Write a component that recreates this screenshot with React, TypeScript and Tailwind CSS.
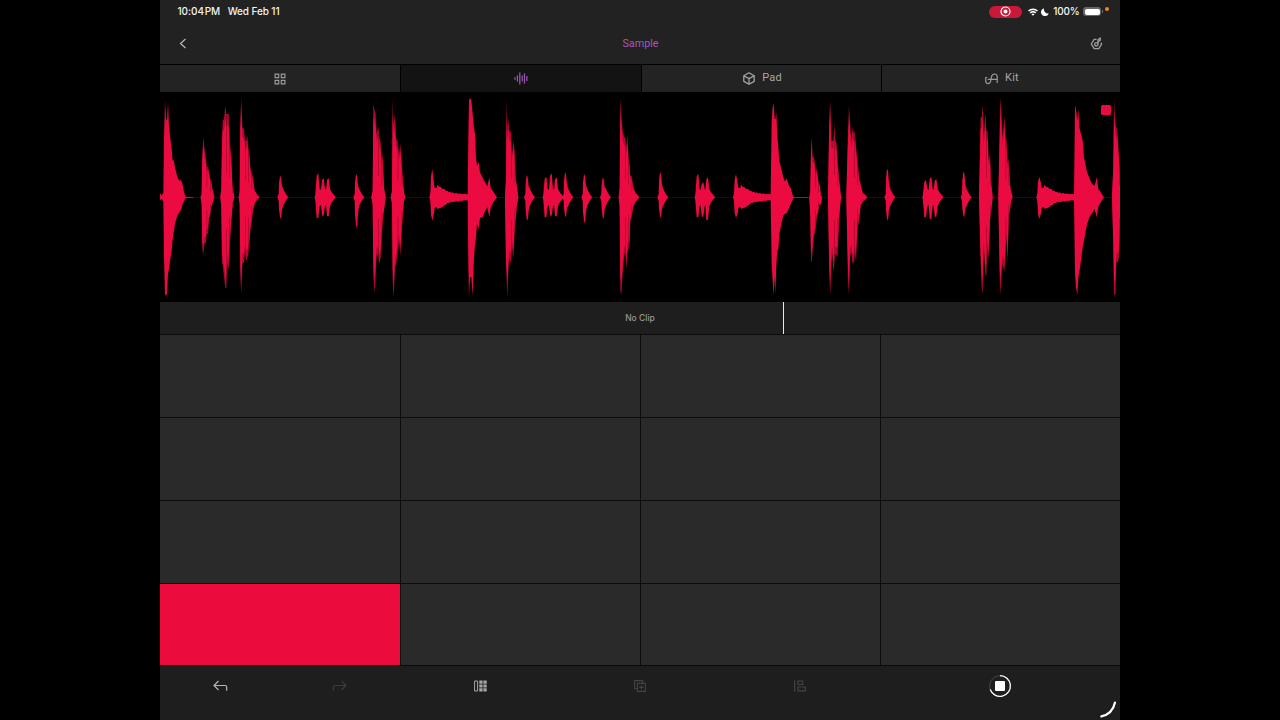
import type { ReactNode } from "react";

type Point = [number, number, number];

// Each point is [x, height above the center line, height below it]
const CENTER = 316;

const kicks: Point[][] = [
  [[0, 12, 8], [5, 5, 5], [10, 14, 12], [12, 180, 180], [15, 290, 290], [18, 235, 296], [21, 230, 290], [24, 285, 230], [27, 215, 215], [30, 185, 190], [35, 145, 160], [38, 110, 125], [41, 112, 105], [46, 85, 75], [52, 62, 55], [58, 50, 45], [63, 52, 38], [68, 38, 20], [72, 15, 12], [77, 2, 2], [100, 1, 1]],
  [[923, 8, 8], [925, 180, 200], [927, 292, 296], [930, 297, 240], [934, 292, 240], [938, 250, 296], [941, 215, 200], [945, 190, 140], [948, 120, 120], [951, 95, 80], [956, 105, 95], [960, 75, 62], [968, 58, 60], [975, 45, 42], [982, 33, 30], [988, 60, 60], [992, 28, 30], [1000, 17, 15], [1011, 0, 0]],
  [[1832, 10, 10], [1835, 230, 200], [1838, 270, 250], [1841, 282, 295], [1844, 235, 240], [1846, 235, 290], [1849, 255, 200], [1852, 180, 160], [1855, 150, 155], [1858, 110, 110], [1864, 85, 80], [1870, 60, 55], [1874, 48, 50], [1880, 56, 48], [1886, 38, 35], [1892, 28, 20], [1897, 10, 10], [1901, 1, 1], [1945, 1, 1]],
  [[2742, 10, 10], [2745, 275, 230], [2748, 265, 270], [2752, 230, 294], [2755, 265, 240], [2758, 210, 225], [2763, 190, 190], [2768, 170, 150], [2772, 120, 130], [2780, 80, 85], [2788, 58, 60], [2796, 40, 48], [2804, 35, 35], [2810, 60, 60], [2815, 25, 28], [2822, 15, 15], [2832, 0, 0]],
];

const snares: Point[][] = [
  [[122, 2, 2], [125, 10, 20], [127, 130, 155], [130, 182, 172], [133, 150, 140], [138, 115, 135], [140, 95, 110], [144, 90, 110], [147, 80, 60], [150, 58, 60], [154, 50, 30], [157, 25, 20], [160, 20, 10], [163, 0, 0]],
  [[181, 0, 0], [184, 30, 30], [186, 180, 200], [188, 230, 200], [192, 235, 240], [196, 275, 272], [199, 250, 272], [203, 250, 200], [206, 250, 220], [208, 200, 170], [211, 150, 120], [214, 120, 70], [217, 40, 40], [220, 20, 10], [223, 0, 0]],
  [[236, 0, 0], [239, 20, 20], [241, 240, 240], [244, 297, 290], [247, 210, 200], [252, 205, 195], [255, 170, 165], [259, 170, 190], [262, 185, 180], [265, 150, 170], [268, 140, 150], [271, 90, 100], [275, 75, 75], [279, 60, 40], [284, 20, 20], [290, 12, 10], [298, 0, 0]],
  [[634, 0, 0], [638, 20, 20], [640, 280, 230], [643, 265, 290], [647, 250, 235], [650, 190, 170], [655, 215, 180], [658, 180, 200], [662, 165, 180], [665, 110, 130], [668, 130, 70], [672, 30, 40], [677, 0, 0]],
  [[692, 0, 0], [696, 20, 20], [698, 295, 250], [701, 220, 302], [705, 250, 210], [708, 175, 200], [713, 170, 170], [717, 130, 130], [721, 160, 175], [725, 110, 110], [728, 60, 60], [732, 15, 10], [736, 0, 0]],
  [[1035, 0, 0], [1038, 60, 200], [1040, 297, 250], [1042, 200, 302], [1045, 235, 220], [1048, 200, 180], [1053, 195, 200], [1056, 130, 150], [1060, 170, 185], [1064, 140, 100], [1067, 60, 70], [1070, 40, 30], [1075, 0, 0]],
  [[1376, 0, 0], [1379, 30, 30], [1381, 297, 280], [1384, 250, 292], [1388, 200, 230], [1393, 180, 170], [1396, 180, 170], [1400, 150, 215], [1402, 190, 170], [1405, 130, 150], [1408, 110, 160], [1411, 65, 70], [1415, 65, 60], [1420, 30, 30], [1426, 15, 15], [1438, 0, 0]],
  [[1948, 0, 0], [1951, 20, 60], [1953, 150, 190], [1955, 182, 195], [1958, 120, 160], [1962, 120, 110], [1965, 100, 110], [1967, 70, 100], [1970, 90, 60], [1975, 50, 45], [1979, 40, 20], [1983, 5, 25], [1986, 0, 0]],
  [[2004, 0, 0], [2008, 250, 240], [2011, 290, 293], [2014, 170, 200], [2017, 170, 170], [2020, 170, 225], [2023, 225, 200], [2026, 170, 170], [2030, 160, 175], [2033, 110, 175], [2037, 60, 70], [2042, 10, 10], [2044, 0, 0]],
  [[2059, 0, 0], [2064, 200, 250], [2067, 275, 293], [2070, 230, 180], [2074, 170, 165], [2078, 210, 200], [2082, 190, 195], [2085, 200, 170], [2088, 150, 195], [2092, 120, 100], [2097, 60, 70], [2102, 40, 25], [2108, 15, 15], [2122, 0, 0]],
  [[2457, 0, 0], [2462, 240, 200], [2465, 240, 270], [2468, 280, 290], [2471, 180, 150], [2476, 255, 230], [2479, 200, 240], [2483, 200, 150], [2486, 110, 190], [2490, 130, 70], [2494, 40, 40], [2498, 0, 0]],
  [[2515, 0, 0], [2519, 200, 240], [2521, 300, 294], [2524, 260, 240], [2528, 180, 200], [2533, 245, 225], [2537, 180, 170], [2540, 170, 120], [2543, 100, 200], [2546, 120, 60], [2550, 40, 40], [2553, 20, 10], [2558, 0, 0]],
  [[2856, 0, 0], [2860, 100, 150], [2862, 295, 294], [2866, 220, 290], [2869, 210, 195], [2873, 190, 195], [2877, 120, 180], [2880, 80, 100]],
];

const hats: Point[] = [
  [361, 60, 60], [589, 65, 85], [1101, 62, 65], [1216, 70, 55], [1273, 65, 72], [1329, 55, 60],
  [1501, 70, 57], [2182, 80, 65], [2411, 72, 55],
];

const triplets: Point[][] = [
  [[473, 72, 62], [489, 57, 55], [504, 58, 57]],
  [[1157, 62, 60], [1173, 72, 55], [1188, 60, 57]],
  [[1613, 70, 60], [1628, 45, 58], [1642, 60, 68]],
  [[2296, 52, 60], [2312, 62, 65], [2327, 55, 58]],
];

const basses: Point[] = [[817, 85, 70], [1728, 70, 62], [2638, 62, 65]];

function toPath(points: Point[]) {
  const top = points.map(([x, up]) => `${x},${CENTER - up}`);
  const bottom = [...points].reverse().map(([x, , down]) => `${x},${CENTER + down}`);
  return `M${top.join("L")}L${bottom.join("L")}Z`;
}

function hat([x, up, down]: Point): Point[] {
  return [[x - 9, 0, 0], [x - 5, 10, 10], [x - 4, up * 0.7, down * 0.6], [x - 1, up * 1.08, down], [x + 2, up, down * 1.08], [x + 5, up * 0.55, down * 0.6], [x + 8, 27, 27], [x + 13, 17, 16], [x + 18, 8, 7], [x + 24, 0, 0]];
}

function triplet([a, b, c]: Point[]): Point[] {
  const peak = ([x, up, down]: Point): Point[] => [[x - 6, 22, 22], [x - 3, up * 0.9, down], [x + 2, up, down], [x + 6, 26, 27]];
  return [[a[0] - 9, 0, 0], [a[0] - 7, 10, 10], ...peak(a), ...peak(b), ...peak(c), [c[0] + 10, 17, 17], [c[0] + 16, 9, 8], [c[0] + 24, 0, 0]];
}

function bass([x, up, down]: Point): Point[] {
  const tail: Point[] = [[5, 42, 48], [7, 28, 32], [12, 28, 29], [16, 38, 35], [20, 32, 33], [26, 30, 31], [31, 25, 28], [36, 26, 24], [40, 20, 23], [45, 20, 17], [50, 15, 17], [54, 17, 13], [58, 13, 15], [62, 15, 13], [67, 11, 14], [72, 14, 11], [77, 10, 13], [82, 12, 10], [88, 9, 11], [95, 10, 9], [108, 9, 9]];
  return [[x - 9, 0, 0], [x - 6, 12, 12], [x - 4, up * 0.75, down * 0.75], [x, up, down], ...tail.map(([dx, u, d]): Point => [x + dx, u, d])];
}

function Waveform() {
  return (
    <svg className="block h-full w-full" viewBox="0 0 2880 630" preserveAspectRatio="none" fill="#ec0b40">
      <rect x="0" y={CENTER - 1} width="2880" height="2" opacity="0.3" />
      {snares.map((points, i) => (
        <g key={i}>
          <path d={toPath(points)} opacity="0.75" />
          <path d={toPath(points.map(([x, u, d]): Point => [x, u * 0.86, d * 0.86]))} />
          {/* gaps between the oscillations of the tail */}
          {points.filter((_, n) => n > 4 && n % 3 === 0).map(([x, u, d]) => (
            <g key={x} fill="#000">
              <rect x={x} y={CENTER - u} width="1.6" height={u * 0.7} opacity="0.4" />
              <rect x={x} y={CENTER + d * 0.35} width="1.6" height={d * 0.65} opacity="0.4" />
            </g>
          ))}
        </g>
      ))}
      {kicks.map((points, i) => <path key={i} d={toPath(points)} />)}
      {hats.map((h) => <path key={h[0]} d={toPath(hat(h))} />)}
      {triplets.map((t) => <path key={t[0][0]} d={toPath(triplet(t))} />)}
      {basses.map((b) => <path key={b[0]} d={toPath(bass(b))} />)}
    </svg>
  );
}

function StatusBar() {
  return (
    <div className="flex h-[22px] items-center justify-between pt-px pr-[11px] pl-[17.5px] font-['Inter'] text-[10px] font-medium text-[#f4f4f4]">
      <div className="flex gap-[7.5px]">
        <span className="tracking-[-0.05px] [word-spacing:-1.8px]">10:04 PM</span>
        <span className="tracking-[-0.1px]">Wed Feb 11</span>
      </div>
      <div className="flex items-center">
        <div className="flex h-3 w-[33px] items-center justify-center rounded-full bg-[#c9193a]">
          <svg className="size-[11px]" viewBox="0 0 11 11" fill="none">
            <circle cx="5.5" cy="5.5" r="4.5" stroke="#fff" strokeWidth="1.2" />
            <circle cx="5.5" cy="5.5" r="2" fill="#fff" />
          </svg>
        </div>
        <svg className="ml-1.5 h-2 w-[10px]" viewBox="0 0 20 16" fill="none" stroke="#fff" strokeWidth="3">
          <path d="M1 6a13 13 0 0 1 18 0M4.5 9.8a8 8 0 0 1 11 0" />
          <path d="M10 15.5l-3-3a4.4 4.4 0 0 1 6 0z" fill="#fff" stroke="none" />
        </svg>
        <svg className="ml-[3px] size-2" viewBox="0 0 16 16" fill="#fff">
          <path d="M6 .5A8 8 0 1 0 15.5 11C10 12.500 4.500 7 6 .5z" />
        </svg>
        <span className="ml-1 tracking-[-0.2px]">100%</span>
        <div className="ml-[3.5px] h-[9px] w-[18px] rounded-[3px] bg-[#666] p-[1.5px]">
          <div className="h-full w-full rounded-[2px] bg-white" />
        </div>
        <div className="ml-px h-[3px] w-px rounded-r bg-[#777]" />
        <div className="mb-[5px] ml-[2px] size-1 rounded-full bg-[#ef8420]" />
      </div>
    </div>
  );
}

function Tab({ active, first, children }: { active?: boolean; first?: boolean; children: ReactNode }) {
  return (
    <div className={`flex items-center justify-center gap-[7px] border-black ${first ? "" : "border-l"} ${active ? "bg-[#131313]" : "bg-[#232323]"}`}>
      {children}
    </div>
  );
}

function Tabs() {
  return (
    <div className="grid h-[28px] grid-cols-[240px_241px_240px_239px] border-t border-black font-['Roboto'] text-[11px] tracking-[0.2px] text-[#a8a8a8]">
      <Tab first>
        <svg className="size-3" viewBox="0 0 12 12" fill="none" stroke="#999" strokeWidth="1.2">
          <path d="M1.1 1.1h3.6v3.6H1.1zM7.3 1.1h3.6v3.6H7.3zM1.1 7.3h3.6v3.6H1.1zM7.3 7.3h3.6v3.6H7.3z" />
        </svg>
      </Tab>
      <Tab active>
        <svg className="mr-px h-[13px] w-[14px]" viewBox="0 0 14 13" stroke="#9f5ab3" strokeWidth="1.2">
          <path d="M1 5.3v2.4M3.4 3.5v6M5.8 .5v12M8.2 3.5v6M10.5 1.5v10M12.9 4v5" />
        </svg>
      </Tab>
      <Tab>
        <svg className="ml-0.5 h-[13px] w-3" viewBox="0 0 12 13" fill="none" stroke="#a3a3a3" strokeWidth="1.3" strokeLinejoin="round">
          <path d="M6 .8l5.2 2.9v5.7L6 12.3.8 9.4V3.7zM.8 3.7L6 6.6l5.2-2.9M6 6.6v5.7" />
        </svg>
        <span>Pad</span>
      </Tab>
      <Tab>
        <svg className="ml-0.5 h-3 w-[13px]" viewBox="0 0 13 12" fill="none" stroke="#999" strokeWidth="1.2" strokeLinecap="round" strokeLinejoin="round">
          <path d="M.7 4.5v3c0 2 1 3.100 2.500 3.100 1.600 0 2.300-1.200 2.600-3.100l.6-3.400C6.800 2 8 1 9.500 1s2.700 1.200 2.700 2.900v5.600M3.200 6.300h9M.7 4.500h1" />
        </svg>
        <span>Kit</span>
      </Tab>
    </div>
  );
}

function Toolbar() {
  return (
    <div className="relative flex h-[54px] bg-[#1e1e1e]">
      <div className="flex h-10 w-[120px] items-center justify-center">
        <svg className="h-3 w-[15px]" viewBox="0 0 15 12" fill="none" stroke="#b5b5b5" strokeWidth="1.2">
          <path d="M5.5 1L1 5.5 5.5 10M1 5.5h11q1.7 0 1.7 1.7v3.5" />
        </svg>
      </div>
      <div className="flex h-10 w-[119px] items-center justify-center">
        <svg className="h-3 w-[15px]" viewBox="0 0 15 12" fill="none" stroke="#3d3d3d" strokeWidth="1.2">
          <path d="M9.5 1L14 5.5 9.5 10M14 5.5H3Q1.3 5.5 1.3 7.2v3.5" />
        </svg>
      </div>
      <div className="flex h-10 w-[161px] items-center justify-center pl-px">
        <svg className="h-3 w-[13px]" viewBox="0 0 13 12" fill="#a5a5a5">
          <path d="M.6 1h3v10h-3z" fill="none" stroke="#a5a5a5" />
          <path d="M5.3 .5h3.3v3.2H5.3zM9.4 .5h3.3v3.2H9.4zM5.3 4.4h3.3v3.2H5.3zM9.4 4.4h3.3v3.2H9.4zM5.3 8.3h3.3v3.2H5.3zM9.4 8.3h3.3v3.2H9.4z" />
        </svg>
      </div>
      <div className="flex h-10 w-[160px] items-center justify-center">
        <svg className="size-3" viewBox="0 0 12 12" fill="none" stroke="#434343" strokeWidth="1.1">
          <path d="M3 8.5H.6V.6h8V3M3.4 3.4h8v8h-8zM7.4 5.2v4.4M5.2 7.4h4.4" />
        </svg>
      </div>
      <div className="flex h-10 w-[160px] items-center justify-center">
        <svg className="size-3" viewBox="0 0 12 12" fill="none" stroke="#434343" strokeWidth="1.2">
          <path d="M.6 .5v11M4 1h4.6v3.5H4zM4 7h7.3v3.8H4z" />
        </svg>
      </div>
      <div className="flex h-10 w-[240px] items-center justify-center">
        <svg className="size-6" viewBox="0 0 24 24" fill="none">
          <circle cx="12" cy="12" r="10.4" stroke="#444" />
          <path d="M12 1.6A10.4 10.4 0 1 1 2.2 15.5" stroke="#fff" strokeWidth="1.3" />
          <rect x="7" y="7" width="10" height="10" rx="1" fill="#fff" />
        </svg>
      </div>
      {/* corner swipe handle */}
      <svg className="absolute right-[3px] bottom-[2px] size-[18px]" viewBox="0 0 18 18" fill="none" stroke="#fff" strokeWidth="2.2" strokeLinecap="round">
        <path d="M2.3 16.4Q13.5 14 16 2.5" />
      </svg>
    </div>
  );
}

export default function App() {
  return (
    <div className="flex h-screen w-screen justify-center overflow-hidden bg-black">
      <div className="flex w-[960px] flex-col bg-[#222222]">
        <StatusBar />
        <header className="grid h-[42px] grid-cols-3 items-center pr-[17px] pl-[18px]">
          <svg className="h-[11px] w-[9px]" viewBox="0 0 9 11" fill="none" stroke="#b8b8b8" strokeWidth="1.2">
            <path d="M7.5 1L2.5 5.5 7.5 10" />
          </svg>
          <h1 className="pt-0.5 text-center font-['Roboto'] text-[10.8px] text-[#a955bf]">Sample</h1>
          <svg className="size-[13px] justify-self-end" viewBox="0 0 13 13" fill="none" stroke="#a0a0a0" strokeWidth="1.3" strokeLinejoin="round">
            <path d="M6.5 2.4H4.2L1.3 7l2.9 4.7h4.6L11.7 7l-.8-1.4" />
            <circle cx="6.3" cy="7.3" r="1.7" />
            <path d="M8 7.3V2.8L10.3 .9v2.3L8.4 4.6" />
          </svg>
        </header>
        <Tabs />
        <div className="relative h-[210px] bg-black">
          <Waveform />
          <div className="absolute top-[13px] right-[9px] size-[10px] rounded-[1.5px] bg-[#ec0b40]" />
        </div>
        <div className="relative flex h-8 items-center justify-center bg-[#1e1e1e]">
          <span className="font-['Inter'] text-[8.5px] font-medium text-[#969696]">No Clip</span>
          <div className="absolute inset-y-0 left-[623px] w-px bg-[#e8e8e8]" />
        </div>
        <div className="grid h-[332px] grid-cols-4 grid-rows-[83px_83px_83px_82px] border-b border-[#080808]">
          {Array.from({ length: 16 }, (_, i) => (
            <div
              key={i}
              className={`border-t border-[#0c0c0c] ${i % 4 ? "border-l" : ""} ${i === 12 ? "bg-[#ec0b3d]" : "bg-[#2a2a2a]"}`}
            />
          ))}
        </div>
        <Toolbar />
      </div>
    </div>
  );
}
